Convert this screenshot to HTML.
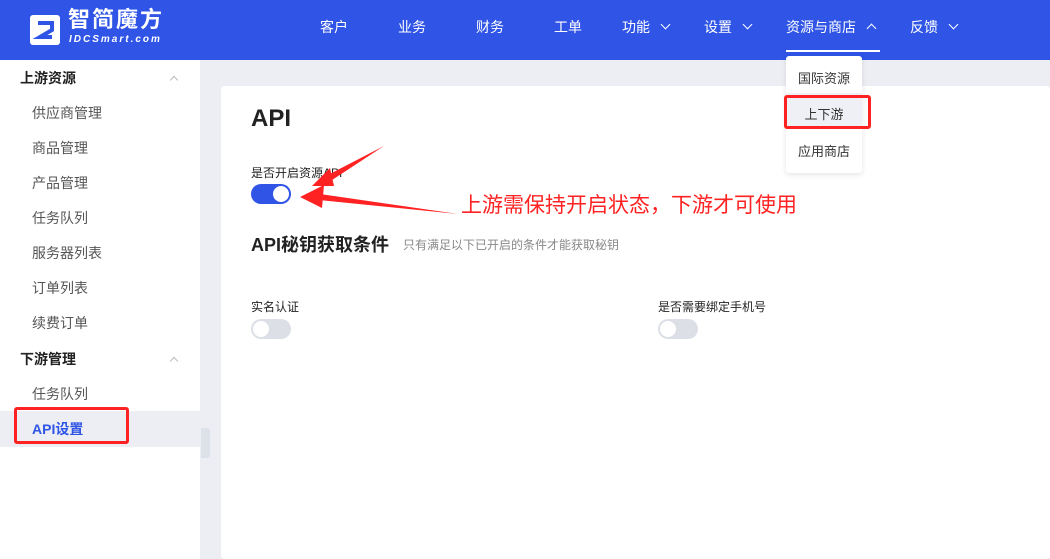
<!DOCTYPE html>
<html><head><meta charset="utf-8"><style>
*{margin:0;padding:0;box-sizing:border-box}
body{width:1050px;height:559px;overflow:hidden;background:#eceef3;font-family:"Liberation Sans","Noto Sans CJK SC",sans-serif;position:relative}
.hd{position:absolute;left:0;top:0;width:1050px;height:60px;background:#2f54e6}
.nav{position:absolute;top:17px;color:#fff;font-size:14px}
.chev{display:inline-block;width:7px;height:7px;border-right:1.5px solid #fff;border-bottom:1.5px solid #fff;transform:rotate(45deg);margin-left:12px;position:relative;top:-4px}
.chev.up{transform:rotate(-135deg);top:0}
.side{position:absolute;left:0;top:60px;width:200px;height:499px;background:#fff}
.si{position:absolute;left:32px;font-size:14px;color:#555}
.sh{position:absolute;left:20px;font-size:14px;color:#222;font-weight:bold}
.sc{position:absolute;left:171px;width:6px;height:6px;border-left:1px solid #bbb;border-top:1px solid #bbb;transform:rotate(45deg)}
.card{position:absolute;left:221px;top:86px;width:829px;height:473px;background:#fff;border-radius:4px}
.t{position:absolute;color:#222}
.sw{position:absolute;width:40px;height:20px;border-radius:10px}
.sw i{position:absolute;top:2px;width:16px;height:16px;border-radius:50%;background:#fff}
.dd{position:absolute;left:786px;top:56px;width:76px;height:117px;background:#fff;border-radius:3px;box-shadow:0 2px 6px rgba(0,0,0,.1)}
.dd div{position:absolute;width:76px;text-align:center;font-size:13px;color:#333}
</style></head><body>
<div class="hd">
<svg style="position:absolute;left:30px;top:15px" width="30" height="30" viewBox="0 0 30 30"><rect x="0" y="0" width="30" height="30" rx="3" fill="#fff"/><path d="M8 8h14v7L10 22h12" stroke="#2f54e6" stroke-width="4" fill="none"/></svg>
<div style="position:absolute;left:68px;top:6px;color:#fff;font-size:22px;font-weight:bold;letter-spacing:2px;line-height:28px">智简魔方</div>
<div style="position:absolute;left:69px;top:34px;color:#fff;font-size:10px;font-weight:bold;font-style:italic;letter-spacing:2px;line-height:12px">IDCSmart.com</div>
<div class="nav" style="left:320px">客户</div>
<div class="nav" style="left:398px">业务</div>
<div class="nav" style="left:476px">财务</div>
<div class="nav" style="left:554px">工单</div>
<div class="nav" style="left:622px">功能<span class="chev"></span></div>
<div class="nav" style="left:704px">设置<span class="chev"></span></div>
<div class="nav" style="left:786px">资源与商店<span class="chev up"></span></div>
<div style="position:absolute;left:786px;top:50px;width:94px;height:2px;background:#fff"></div>
<div class="nav" style="left:910px">反馈<span class="chev"></span></div>
</div>
<div class="side">
<div class="sh" style="top:8px">上游资源</div><div class="sc" style="top:17px"></div>
<div class="si" style="top:43px">供应商管理</div>
<div class="si" style="top:78px">商品管理</div>
<div class="si" style="top:113px">产品管理</div>
<div class="si" style="top:148px">任务队列</div>
<div class="si" style="top:183px">服务器列表</div>
<div class="si" style="top:218px">订单列表</div>
<div class="si" style="top:253px">续费订单</div>
<div class="sh" style="top:289px">下游管理</div><div class="sc" style="top:298px"></div>
<div class="si" style="top:324px">任务队列</div>
<div style="position:absolute;left:0;top:351px;width:200px;height:36px;background:#eceef3"></div>
<div class="si" style="top:359px;color:#2f54e6;font-weight:bold">API设置</div>
<div style="position:absolute;left:14px;top:347px;width:115px;height:37px;border:3px solid #f22;border-radius:3px"></div>
</div>
<div style="position:absolute;left:201px;top:428px;width:9px;height:30px;background:#dde1ea;border-radius:0 3px 3px 0"></div>
<div class="card"></div>
<div class="t" style="left:251px;top:105px;font-size:24px;font-weight:bold">API</div>
<div class="t" style="left:251px;top:164px;font-size:12px">是否开启资源API</div>
<div class="sw" style="left:251px;top:184px;background:#2f54e6"><i style="left:22px"></i></div>
<div class="t" style="left:251px;top:231px;font-size:18px;font-weight:bold">API秘钥获取条件</div>
<div class="t" style="left:403px;top:236px;font-size:12px;color:#888">只有满足以下已开启的条件才能获取秘钥</div>
<div class="t" style="left:251px;top:298px;font-size:12px">实名认证</div>
<div class="sw" style="left:251px;top:319px;background:#dcdfe6"><i style="left:2px"></i></div>
<div class="t" style="left:658px;top:298px;font-size:12px">是否需要绑定手机号</div>
<div class="sw" style="left:658px;top:319px;background:#dcdfe6"><i style="left:2px"></i></div>
<div class="t" style="left:461px;top:189px;font-size:21px;color:#f22">上游需保持开启状态，下游才可使用</div>
<svg style="position:absolute;left:0;top:0" width="1050" height="559"><g fill="#f22"><polygon points="384,146 322,178 326,184"/><polygon points="312,186 330,168 334,186"/><polygon points="458,214 320,194 319,200"/><polygon points="300,197 324,185 322,208"/></g></svg>
<div class="dd">
<div style="top:12px">国际资源</div>
<div style="top:37px;left:0;height:36px;background:#eef0f5"></div>
<div style="top:48px">上下游</div>
<div style="top:85px">应用商店</div>
</div>
<div style="position:absolute;left:784px;top:95px;width:87px;height:34px;border:3px solid #f22;border-radius:3px"></div>
</body></html>
